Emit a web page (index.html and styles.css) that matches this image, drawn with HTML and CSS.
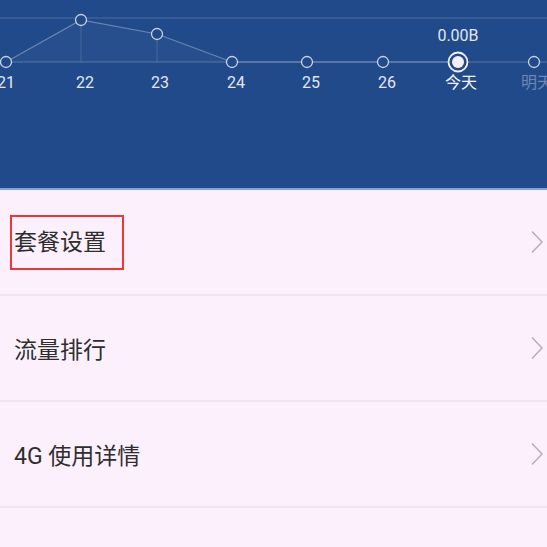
FILE: index.html
```html
<html>

<head>
    <meta charset="utf-8">
    <link rel="stylesheet" href="styles.css">
</head>

<body>

    <div class="hlavicka">
        <svg class="graf" width="547" height="188" viewBox="0 0 547 188">
            <line class="mriezka" x1="0" y1="18" x2="547" y2="18" />
            <line class="zaklad" x1="0" y1="62" x2="547" y2="62" />
            <polygon class="plocha" points="6,62 81,20 157,34 232,62" />
            <line class="stlpik" x1="81" y1="26" x2="81" y2="62" />
            <line class="stlpik" x1="157" y1="40" x2="157" y2="62" />
            <polyline class="ciara" points="6,62 81,20 157,34 232,62 458,62" />

            <circle class="bod" cx="6" cy="62" r="5.5" />
            <circle class="bod" cx="81" cy="20" r="5.5" />
            <circle class="bod" cx="157" cy="34" r="5.5" />
            <circle class="bod" cx="232" cy="62" r="5.5" />
            <circle class="bod" cx="307" cy="62" r="5.5" />
            <circle class="bod" cx="383" cy="62" r="5.5" />
            <circle class="dnes_kruh" cx="458" cy="62" r="9.5" />
            <circle class="dnes_bod" cx="458" cy="62" r="6" />
            <circle class="bod" cx="534" cy="62" r="5.5" />

            <text class="hodnota" x="458" y="41">0.00B</text>
            <text class="den" x="6" y="88">21</text>
            <text class="den" x="85" y="88">22</text>
            <text class="den" x="160" y="88">23</text>
            <text class="den" x="236" y="88">24</text>
            <text class="den" x="311" y="88">25</text>
            <text class="den" x="387" y="88">26</text>
            <text class="den dnes" x="461" y="88">今天</text>
            <text class="den zajtra" x="537" y="88">明天</text>
        </svg>
    </div>

    <div class="zoznam">
        <div class="riadok">
            <span class="nazov oznaceny">套餐设置</span>
            <svg class="sipka" width="12" height="24" viewBox="0 0 12 24">
                <polyline points="1,1.5 11,12 1,22.5" />
            </svg>
        </div>
        <div class="riadok">
            <span class="nazov">流量排行</span>
            <svg class="sipka" width="12" height="24" viewBox="0 0 12 24">
                <polyline points="1,1.5 11,12 1,22.5" />
            </svg>
        </div>
        <div class="riadok">
            <span class="nazov">4G 使用详情</span>
            <svg class="sipka" width="12" height="24" viewBox="0 0 12 24">
                <polyline points="1,1.5 11,12 1,22.5" />
            </svg>
        </div>
        <div class="riadok"></div>
    </div>

</body>

</html>
```

FILE: styles.css
```css
body {
    margin: 0;
    background-color: #fcf0fc;
    font-family: Roboto, "Noto Sans CJK SC", sans-serif;
    overflow: hidden;
}

.hlavicka {
    height: 188px;
    background-color: #214a8a;
    border-bottom: 2px solid #8c9fd0;
}

.graf {
    display: block;
}

.mriezka {
    stroke: rgba(255, 255, 255, 0.12);
    stroke-width: 1.5;
}

.zaklad {
    stroke: rgba(255, 255, 255, 0.16);
    stroke-width: 1.5;
}

.plocha {
    fill: rgba(255, 255, 255, 0.03);
}

.stlpik {
    stroke: rgba(255, 255, 255, 0.14);
    stroke-width: 1;
}

.ciara {
    fill: none;
    stroke: rgba(255, 255, 255, 0.32);
    stroke-width: 1.2;
}

.bod {
    fill: #214a8a;
    stroke: rgba(255, 255, 255, 0.75);
    stroke-width: 1.3;
}

.dnes_kruh {
    fill: #214a8a;
    stroke: #f4f0fa;
    stroke-width: 1.8;
}

.dnes_bod {
    fill: #f4f0fa;
}

.hodnota,
.den {
    font-family: Roboto, "Noto Sans CJK SC", sans-serif;
    font-size: 16px;
    fill: #e2e6f2;
    text-anchor: middle;
}

.den.dnes {
    fill: #f4f4fa;
}

.den.zajtra {
    fill: rgba(255, 255, 255, 0.35);
}

.riadok {
    height: 104px;
    border-bottom: 2px solid #f1e5f2;
    display: flex;
    align-items: center;
    justify-content: space-between;
    padding-left: 14px;
    padding-right: 4px;
}

.nazov {
    font-family: Roboto, "Noto Sans CJK SC", sans-serif;
    font-size: 23px;
    color: #2e2e2e;
}

.oznaceny {
    margin-left: -4px;
    padding: 0 16px 0 2px;
    border: 2px solid #f03535;
    line-height: 51px;
}

.sipka polyline {
    fill: none;
    stroke: #b7adbd;
    stroke-width: 1.5;
}
```
